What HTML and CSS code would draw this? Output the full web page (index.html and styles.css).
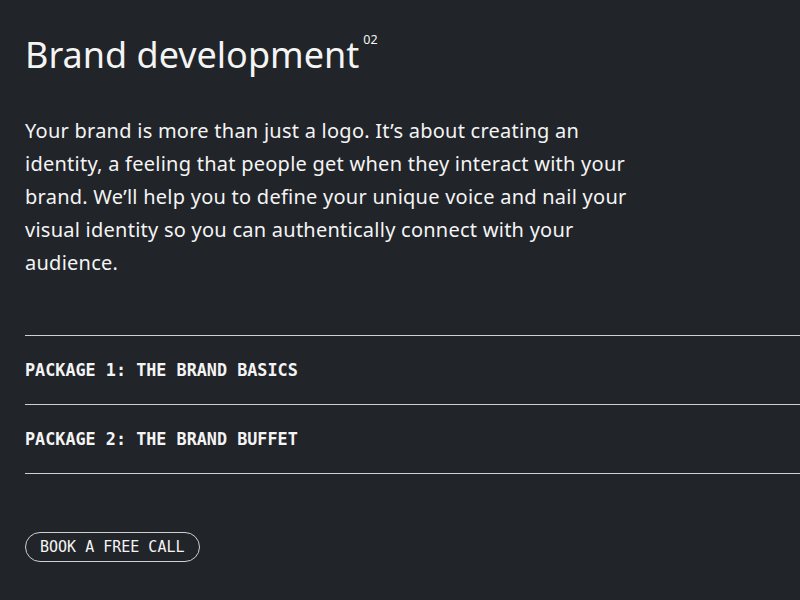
FILE: index.html
```html
<!DOCTYPE html>
<html lang="en">
<head>
<meta charset="utf-8">
<title>Brand development</title>
<link rel="stylesheet" href="styles.css">
</head>
<body>
<main class="section">
  <h1 class="title">Brand development<sup class="num">02</sup></h1>
  <p class="intro">Your brand is more than just a logo. It’s about creating an identity, a feeling that people get when they interact with your brand. We’ll help you to define your unique voice and nail your visual identity so you can authentically connect with your audience.</p>
  <ul class="packages">
    <li class="package">PACKAGE 1: THE BRAND BASICS</li>
    <li class="package">PACKAGE 2: THE BRAND BUFFET</li>
  </ul>
  <a class="cta" href="#">BOOK A FREE CALL</a>
</main>
</body>
</html>
```
FILE: styles.css
```css
html, body {
  margin: 0;
  padding: 0;
  background: #212429;
  color: #f4f4f4;
  height: 100%;
  overflow: hidden;
}
.section {
  padding: 30px 0 0 25px;
  display: flex;
  flex-direction: column;
  align-items: flex-start;
}
.title {
  margin: 0;
  font-family: "Noto Sans", "Open Sans", sans-serif;
  font-weight: 400;
  font-size: 36px;
  line-height: 50px;
}
.num {
  font-size: 12.5px;
  vertical-align: top;
  position: relative;
  top: -15px;
  margin-left: 4px;
}
.intro {
  margin: 34px 0 0 0;
  width: 612px;
  font-family: "Noto Sans", "Open Sans", sans-serif;
  font-size: 20px;
  line-height: 33px;
  letter-spacing: 0.25px;
}
.packages {
  list-style: none;
  margin: 56px 0 0 0;
  padding: 0;
  align-self: stretch;
  border-top: 1px solid #d0d0d0;
}
.package {
  border-bottom: 1px solid #d0d0d0;
  height: 68px;
  display: flex;
  align-items: center;
  font-family: "DejaVu Sans Mono", "Liberation Mono", monospace;
  font-weight: 700;
  font-size: 16.8px;
}
.cta {
  margin-top: 58px;
  display: inline-flex;
  align-items: center;
  height: 28px;
  padding: 0 14px;
  border: 1px solid #d0d0d0;
  border-radius: 15px;
  color: #f4f4f4;
  text-decoration: none;
  font-family: "DejaVu Sans Mono", "Liberation Mono", monospace;
  font-size: 15px;
}
```
